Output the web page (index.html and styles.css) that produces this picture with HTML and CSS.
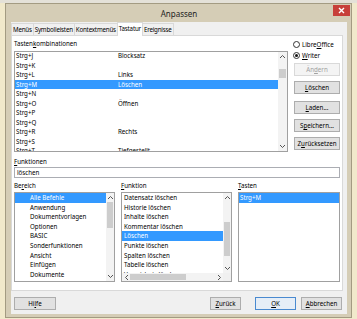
FILE: index.html
```html
<!DOCTYPE html>
<html lang="de">
  <head>
    <meta charset="UTF-8" />
    <meta name="viewport" content="width=device-width, initial-scale=1.0" />
    <title>Anpassen</title>
    <link rel="stylesheet" href="styles.css">
  </head>
  <body>
    <div class="desk">
      <div class="dialog">
        <div class="titlebar">
          <span class="title">Anpassen</span>
          <span class="close">
            <svg width="7" height="7" viewBox="0 0 7 7"><path d="M1 1L6 6M6 1L1 6" stroke="#fff" stroke-width="1.4" /></svg>
          </span>
        </div>

        <div class="client">
          <ul class="tabs">
            <li>Menüs</li>
            <li>Symbolleisten</li>
            <li>Kontextmenüs</li>
            <li class="active">Tastatur</li>
            <li>Ereignisse</li>
          </ul>

          <div class="panel">
            <div class="top">
              <div>
                <div class="label">Tasten<u>k</u>ombinationen</div>
                <div class="listbox shortcuts">
                  <ul class="rows">
                    <li><span>Strg+J</span><span>Blocksatz</span></li>
                    <li><span>Strg+K</span><span></span></li>
                    <li><span>Strg+L</span><span>Links</span></li>
                    <li class="sel"><span>Strg+M</span><span>Löschen</span></li>
                    <li><span>Strg+N</span><span></span></li>
                    <li><span>Strg+O</span><span>Öffnen</span></li>
                    <li><span>Strg+P</span><span></span></li>
                    <li><span>Strg+Q</span><span></span></li>
                    <li><span>Strg+R</span><span>Rechts</span></li>
                    <li><span>Strg+S</span><span></span></li>
                    <li><span>Strg+T</span><span>Tiefgestellt</span></li>
                  </ul>
                  <div class="vscroll">
                    <span class="arrow"><svg width="7" height="5" viewBox="0 0 7 5"><path d="M1 4L3.5 1.5L6 4" fill="none" stroke="#555" /></svg></span>
                    <div class="track"><span class="thumb thumb-keys"></span></div>
                    <span class="arrow"><svg width="7" height="5" viewBox="0 0 7 5"><path d="M1 1L3.5 3.5L6 1" fill="none" stroke="#555" /></svg></span>
                  </div>
                </div>
              </div>

              <div class="side">
                <label class="radio"><span class="dot"></span><span>Libre<u>O</u>ffice</span></label>
                <label class="radio on"><span class="dot"></span><span><u>W</u>riter</span></label>
                <button class="btn change" disabled>Än<u>d</u>ern</button>
                <button class="btn delete"><u>L</u>öschen</button>
                <button class="btn load"><u>L</u>aden...</button>
                <button class="btn save">S<u>p</u>eichern...</button>
                <button class="btn reset">Z<u>u</u>rücksetzen</button>
              </div>
            </div>

            <div class="label gap-top"><u>F</u>unktionen</div>
            <div class="search">löschen</div>

            <div class="cols">
              <div>
                <div class="label">Be<u>r</u>eich</div>
                <div class="listbox area">
                  <ul class="rows tree">
                    <li class="sel">Alle Befehle</li>
                    <li>Anwendung</li>
                    <li>Dokumentvorlagen</li>
                    <li>Optionen</li>
                    <li>BASIC</li>
                    <li>Sonderfunktionen</li>
                    <li>Ansicht</li>
                    <li>Einfügen</li>
                    <li>Dokumente</li>
                    <li>Format</li>
                  </ul>
                  <div class="vscroll">
                    <span class="arrow"><svg width="7" height="5" viewBox="0 0 7 5"><path d="M1 4L3.5 1.5L6 4" fill="none" stroke="#555" /></svg></span>
                    <div class="track"><span class="thumb thumb-area"></span></div>
                    <span class="arrow"><svg width="7" height="5" viewBox="0 0 7 5"><path d="M1 1L3.5 3.5L6 1" fill="none" stroke="#555" /></svg></span>
                  </div>
                </div>
              </div>

              <div>
                <div class="label"><u>F</u>unktion</div>
                <div class="listbox funcs">
                  <ul class="rows">
                    <li>Datensatz löschen</li>
                    <li>Historie löschen</li>
                    <li>Inhalte löschen</li>
                    <li>Kommentar löschen</li>
                    <li class="sel">Löschen</li>
                    <li>Punkte löschen</li>
                    <li>Spalten löschen</li>
                    <li>Tabelle löschen</li>
                    <li>Verzeichnis löschen</li>
                  </ul>
                  <div class="vscroll">
                    <span class="arrow"><svg width="7" height="5" viewBox="0 0 7 5"><path d="M1 4L3.5 1.5L6 4" fill="none" stroke="#555" /></svg></span>
                    <div class="track"><span class="thumb thumb-funcs"></span></div>
                    <span class="arrow"><svg width="7" height="5" viewBox="0 0 7 5"><path d="M1 1L3.5 3.5L6 1" fill="none" stroke="#555" /></svg></span>
                  </div>
                  <div class="hscroll">
                    <span class="arrow"><svg width="5" height="7" viewBox="0 0 5 7"><path d="M4 1L1.5 3.5L4 6" fill="none" stroke="#555" /></svg></span>
                    <div class="htrack"><span class="hthumb"></span></div>
                    <span class="arrow"><svg width="5" height="7" viewBox="0 0 5 7"><path d="M1 1L3.5 3.5L1 6" fill="none" stroke="#555" /></svg></span>
                  </div>
                  <div class="corner"></div>
                </div>
              </div>

              <div>
                <div class="label"><u>T</u>asten</div>
                <div class="listbox keys">
                  <ul class="rows">
                    <li class="sel">Strg+M</li>
                  </ul>
                </div>
              </div>
            </div>
          </div>

          <div class="footer">
            <button class="btn help">Hi<u>l</u>fe</button>
            <button class="btn back"><u>Z</u>urück</button>
            <button class="btn ok"><u>O</u>K</button>
            <button class="btn cancel"><u>A</u>bbrechen</button>
          </div>
        </div>
      </div>
    </div>
  </body>
</html>
```

FILE: styles.css
```css
* {
  box-sizing: border-box;
}
body {
  margin: 0;
  width: 357px;
  height: 319px;
  overflow: hidden;
  background-color: #f1e9cb;
  font-family: "Noto Sans", "Open Sans", sans-serif;
  font-size: 6.2px;
  color: #000;
}
ul {
  margin: 0;
  padding: 0;
  list-style: none;
}
u {
  text-decoration-thickness: 0.5px;
  text-underline-offset: 1px;
}

/* hintergrund (writer) */
.desk {
  height: 319px;
  padding: 3px 0 0 5px;
  background: linear-gradient(#e4e1d8 0 3px, transparent 3px);
}

/* fenster */
.dialog {
  width: 347px;
  height: 315px;
  border: 1px solid #a39b82;
  background-color: #d5cdb6;
  padding: 0 4px 3px 5px;
  display: flex;
  flex-direction: column;
}
.titlebar {
  height: 18px;
  position: relative;
  display: flex;
  align-items: center;
  justify-content: center;
}
.title {
  font-size: 8px;
  color: #222;
}
.close {
  position: absolute;
  top: 1px;
  right: -3px;
  width: 17px;
  height: 11px;
  background-color: #c7403a;
  display: flex;
  align-items: center;
  justify-content: center;
}
.close svg {
  display: block;
}

.client {
  flex: 1;
  background-color: #f0f0f0;
  display: flex;
  flex-direction: column;
}

/* reiter */
.tabs {
  height: 13px;
  display: flex;
  align-items: flex-end;
}
.tabs li {
  height: 12px;
  line-height: 11px;
  padding: 0 1px;
  letter-spacing: -0.2px;
  border: 1px solid #d9d9d9;
  border-bottom: none;
  margin-right: -1px;
  background-color: #f0f0f0;
}
.tabs li.active {
  height: 14px;
  margin-bottom: -1px;
  background-color: #fff;
  position: relative;
  z-index: 1;
}

.panel {
  width: 332px;
  height: 256px;
  border: 1px solid #d9d9d9;
  background-color: #fff;
  padding: 3px 2px 0 2px;
}
.label {
  height: 9px;
  line-height: 9px;
}
.gap-top {
  margin-top: 5px;
}

.top {
  display: grid;
  grid-template-columns: 274px 48px;
  gap: 4px;
}

/* listen */
.listbox {
  border: 1px solid #a0a0a0;
  background-color: #fff;
  display: grid;
  grid-template-columns: 1fr 9px;
  overflow: hidden;
}
.shortcuts {
  margin-top: 3px;
  height: 101px;
}
.rows {
  overflow: hidden;
  min-height: 0;
}
.rows li {
  height: 9.5px;
  line-height: 9.5px;
  padding-left: 1px;
  white-space: nowrap;
}
.rows li.sel {
  background-color: #3399ff;
  color: #fff;
}
.shortcuts .rows {
  margin-top: -1px;
}
.shortcuts .rows li {
  display: grid;
  grid-template-columns: 102px 1fr;
}

.vscroll {
  background-color: #f3f3f3;
  display: flex;
  flex-direction: column;
  min-height: 0;
}
.arrow {
  height: 9px;
  display: flex;
  align-items: center;
  justify-content: center;
}
.track {
  flex: 1;
  padding: 0 1px;
}
.thumb {
  display: block;
  height: 9px;
  background-color: #cdcdcd;
}
.thumb-keys {
  margin-top: 8px;
}

/* rechte spalte */
.side {
  padding-top: 1px;
  display: flex;
  flex-direction: column;
  align-items: flex-end;
}
.radio {
  align-self: flex-start;
  height: 9px;
  margin-left: 1px;
  display: flex;
  align-items: center;
  gap: 2px;
}
.radio + .radio {
  margin-top: 2px;
}
.dot {
  width: 7px;
  height: 7px;
  border: 1px solid #333;
  border-radius: 50%;
  background-color: #fff;
  display: flex;
  align-items: center;
  justify-content: center;
}
.radio.on .dot::after {
  content: "";
  width: 3px;
  height: 3px;
  border-radius: 50%;
  background-color: #111;
}

.btn {
  height: 13px;
  padding: 0;
  border: 1px solid #adadad;
  background-color: #e1e1e1;
  font-family: inherit;
  font-size: 6.2px;
  color: #000;
  line-height: 11px;
  text-align: center;
  white-space: nowrap;
}
.side .btn {
  width: 46px;
}
.btn:disabled {
  background-color: #f4f4f4;
  border-color: #d9d9d9;
  color: #a2a2a2;
}
.change {
  margin-top: 3px;
}
.delete,
.save,
.reset {
  margin-top: 5px;
}
.load {
  margin-top: 7px;
}

.search {
  margin-top: 1px;
  height: 11px;
  border: 1px solid #abadb3;
  padding-left: 2px;
  line-height: 9px;
}

/* drei listen unten */
.cols {
  margin-top: 3px;
  display: grid;
  grid-template-columns: 101px 111px 102px;
  justify-content: space-between;
}
.cols .listbox {
  margin-top: 2px;
  height: 90px;
}
.cols .rows li {
  height: 9.6px;
  line-height: 9.6px;
}
.area {
  grid-template-columns: 1fr 8px;
}
.tree li {
  padding-left: 15px;
}
.thumb-area {
  height: 26px;
}

.funcs {
  grid-template-columns: 1fr 8px;
  grid-template-rows: 1fr 8px;
}
.funcs .rows li {
  padding-left: 2px;
}
.thumb-funcs {
  margin-top: 20px;
  height: 34px;
}
.hscroll {
  background-color: #f3f3f3;
  display: flex;
}
.hscroll .arrow {
  width: 8px;
  height: 8px;
}
.htrack {
  flex: 1;
  padding: 1px 0;
}
.hthumb {
  display: block;
  width: 56px;
  height: 100%;
  background-color: #cdcdcd;
}
.corner {
  background-color: #f0f0f0;
}
.keys {
  display: block;
}

/* fussleiste */
.footer {
  padding: 6px 5px 0 3px;
  display: flex;
}
.help {
  width: 42px;
}
.back {
  width: 31px;
  margin-left: auto;
}
.ok {
  width: 41px;
  margin-left: 14px;
  border-color: #4a8ad0;
  background-color: #e6eef7;
}
.cancel {
  width: 41px;
  margin-left: 5px;
}
```
